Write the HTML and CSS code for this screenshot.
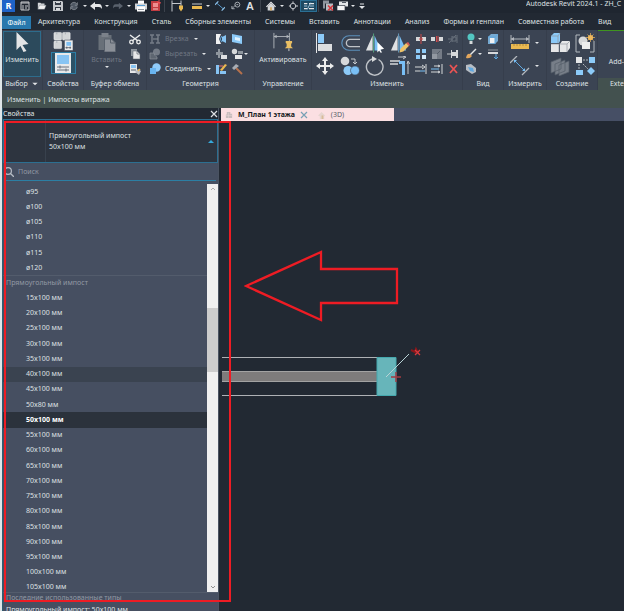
FILE: index.html
```html
<!DOCTYPE html>
<html lang="ru">
<head>
<meta charset="utf-8">
<title>Autodesk Revit 2024.1</title>
<link rel="stylesheet" href="styles.css">
</head>
<body>
<svg class="sprite" aria-hidden="true">
  <symbol id="i-caret" viewBox="0 0 6 4"><path d="M1 1h4L3 3z" fill="#e3e5e8"/></symbol>
  <symbol id="i-recent" viewBox="0 0 10 10"><path d="M1 1h8v8H1z" fill="none" stroke="#c6c8cb"/><path d="M1 2h8M3 4v5M5 5h3M5 7h2" stroke="#c6c8cb" fill="none"/></symbol>
  <symbol id="i-open" viewBox="0 0 12 10"><path d="M1 9V1h3l1 1h4v2" fill="#d6d8da"/><path d="M1 9l2-5h8L9 9z" fill="#f1f1f1" stroke="#59606b" stroke-width=".4"/></symbol>
  <symbol id="i-save" viewBox="0 0 10 10"><path d="M0 0h9l1 1v9H0z" fill="#c5c8cc"/><path d="M2 1h6v3H2zM2 6h6v3H2z" fill="#343b46"/><path d="M3 1h4v1H3zM3 7h4v2H3z" fill="#d7d9dc"/></symbol>
  <symbol id="i-sync" viewBox="0 0 12 10"><circle cx="6" cy="5" r="4" fill="#4f5864"/><path d="M2 4a4 4 0 0 1 7-2l1-1v3H7M10 6a4 4 0 0 1-7 2L2 9V6h3" fill="none" stroke="#8a9099"/></symbol>
  <symbol id="i-undo" viewBox="0 0 12 8"><path d="M0 4l5-4v2h4q3 0 3 5-1-2-3-2H5v3z" fill="#e6e7e8"/></symbol>
  <symbol id="i-redo" viewBox="0 0 12 8"><path d="M12 4L7 0v2H3Q0 2 0 7q1-2 3-2h4v3z" fill="#59616c"/></symbol>
  <symbol id="i-print" viewBox="0 0 12 11"><path d="M3 0h6v4H3z" fill="#fff"/><path d="M0 3h12v6H0z" fill="#d2d5d8"/><path d="M2 6h8v5H2z" fill="#fff"/><path d="M2 5h8" stroke="#5a9fd4"/><path d="M3 9h6" stroke="#8f969e"/></symbol>
  <symbol id="i-pdf" viewBox="0 0 12 12"><path d="M1 1h7l2 2v8H1z" fill="#c33c41"/><path d="M3 3h5v4H3z" fill="#ee8d8f"/><path d="M9 0v4M7 2l4 1" stroke="#f34f55"/><path d="M3 9h5" stroke="#f8c9c9"/></symbol>
  <symbol id="i-qdim" viewBox="0 0 12 11"><path d="M1 0v11M10 0v7M1 3h9" stroke="#c5c8cc" fill="none"/><path d="M8 5h4v3l-2 3-2-3z" fill="#eab951"/></symbol>
  <symbol id="i-qrule" viewBox="0 0 12 8"><path d="M1 2h10" stroke="#c5c8cc"/><path d="M1 4h10v3H1z" fill="#eab951"/></symbol>
  <symbol id="i-line" viewBox="0 0 12 11"><path d="M2 2l8 7" stroke="#5fa8e0"/><path d="M0 4l4-4M8 11l4-4" stroke="#8fc4ed" stroke-width="1.4"/></symbol>
  <symbol id="i-tag" viewBox="0 0 11 10"><path d="M1 8l4-4" stroke="#9da3aa"/><circle cx="7" cy="3.5" r="2.7" fill="none" stroke="#b3b8be"/><path d="M6 3.500h2M1 5v3h3" stroke="#b3b8be" fill="none"/></symbol>
  <symbol id="i-home" viewBox="0 0 12 11"><path d="M0 6l6-6 6 6-1 1-5-5-5 5z" fill="#e8e9ea"/><path d="M2 6l4-4 4 4v5H2z" fill="#d5d7d9"/><path d="M5 7h2v4H5z" fill="#d8a75a"/></symbol>
  <symbol id="i-section" viewBox="0 0 11 10"><circle cx="5.500" cy="5" r="3" fill="none" stroke="#c5c8cc"/><path d="M1 5h2M8 5h3M5.500 0v2M5.500 8v2" stroke="#e6e7e8"/></symbol>
  <symbol id="i-thin" viewBox="0 0 12 10"><path d="M0 2h4M6 2h6M0 8h4M6 8h6" stroke="#e6e7e8" stroke-width="1.500"/><path d="M0 5h4M7 5h5M4 9l4-8" stroke="#b9d9ee"/></symbol>
  <symbol id="i-closehid" viewBox="0 0 12 11"><path d="M1 0h6v3H3v5H1z" fill="#8e949c"/><path d="M4 3h7v7H4z" fill="#b9bdc2"/><path d="M6 5l5 5M11 5l-5 5" stroke="#d6393e" stroke-width="1.6"/></symbol>
  <symbol id="i-switch" viewBox="0 0 12 11"><path d="M2 1h9v5H2z" fill="#e3e5e7"/><path d="M0 5h8v5H0z" fill="#f5f5f5" stroke="#303843" stroke-width=".7"/><path d="M5 2h4" stroke="#505863"/></symbol>
  <symbol id="i-more" viewBox="0 0 6 7"><path d="M1 1h4" stroke="#e3e5e8"/><path d="M0 3h6L3 6z" fill="#e3e5e8"/></symbol>

  <symbol id="i-cursor" viewBox="0 0 13 20"><path d="M1 0l12 12-6 1 4 6-3 1-3-6-4 4z" fill="#e4e5e6"/></symbol>
  <symbol id="i-types" viewBox="0 0 21 20"><g fill="#d3d5d7" stroke="#fff" stroke-width=".5"><rect x="1" y="1" width="8" height="8" rx="1"/><rect x="10" y="1" width="8" height="8" rx="1"/><rect x="1" y="10" width="8" height="8" rx="1"/></g><path d="M4 1v2M13 1v2M4 10v2" stroke="#8f969e" stroke-width=".6"/><path d="M12 9h9v11h-9z" fill="#eceded" stroke="#3b4453" stroke-width=".6"/><path d="M14 11h5v4h-5z" fill="#7fc0f3"/><path d="M13 17h6M14.500 15.800v2.500M18 15.800v2.500" stroke="#3b4453" stroke-width=".7"/></symbol>
  <symbol id="i-props" viewBox="0 0 16 20"><path d="M0 0h16v20H0z" fill="#e8e9ea"/><path d="M2 2h12v9H2z" fill="#87c4f3"/><path d="M2 14h12M2 17h12M5 12.500v3M11 15.500v3" stroke="#69717d"/></symbol>
  <symbol id="i-paste" viewBox="0 0 19 20"><path d="M1 3h13v15H1z" fill="#697079"/><path d="M4 1h7v4H4z" fill="#7b818a"/><path d="M7 7h7l4 4v9H7z" fill="#8b9098" stroke="#59616c"/><path d="M13 7v4h5" fill="none" stroke="#59616c"/></symbol>
  <symbol id="i-cut" viewBox="0 0 12 12"><path d="M1 2l8 6M11 2L3 8" stroke="#eceded" stroke-width="1.500"/><circle cx="2.500" cy="9" r="1.800" fill="none" stroke="#eceded" stroke-width="1.300"/><circle cx="9.500" cy="9" r="1.800" fill="none" stroke="#eceded" stroke-width="1.300"/></symbol>
  <symbol id="i-copy" viewBox="0 0 12 12"><path d="M2 1h6v7H2z" fill="#8f969e"/><path d="M4 3h4l3 3v5H4z" fill="#e6e7e8" stroke="#59616c" stroke-width=".5"/><path d="M8 3v3h3" fill="none" stroke="#59616c" stroke-width=".7"/></symbol>
  <symbol id="i-match" viewBox="0 0 12 12"><path d="M1 1h7v9H1z" fill="#e6e7e8"/><path d="M2 2h5v3H2z" fill="#87c4f3"/><path d="M2 7h5" stroke="#59616c"/><path d="M6 9l3-3 3 2-2 4z" fill="#b9bdc2"/><path d="M9 8l2-2" stroke="#eab951" stroke-width="1.500"/></symbol>
  <symbol id="i-cope" viewBox="0 0 12 12"><path d="M1 2h4M1 10h4M3 2v8M7 2h4M7 10h4M9 2v8" stroke="#747b86" stroke-width="1.500"/><path d="M4 6h5" stroke="#8a9099"/></symbol>
  <symbol id="i-cutgeo" viewBox="0 0 12 12"><circle cx="7.500" cy="4" r="3.500" fill="#747b86"/><path d="M1 5h4q0 3 3 4v2H1z" fill="#5e6671" stroke="#8a9099" stroke-width=".7"/></symbol>
  <symbol id="i-join" viewBox="0 0 12 12"><circle cx="7.500" cy="4.500" r="4.200" fill="#8fcaf8"/><path d="M1 5h6v6H1z" fill="#69b4ef"/></symbol>
  <symbol id="i-wallin" viewBox="0 0 12 12"><path d="M1 1h5L4 6l2 5H1z" fill="#f0f1f2"/><path d="M11 2L7 4v4l4 2z" fill="#87c4f3"/><path d="M7 3L5 6l2 3" stroke="#5fa8e0" fill="none"/></symbol>
  <symbol id="i-face" viewBox="0 0 12 12"><path d="M1 1l10 2v8L1 9z" fill="#8ccaf8"/><path d="M4 4l5 1v3L4 7z" fill="#e0f2fe"/></symbol>
  <symbol id="i-beam" viewBox="0 0 12 12"><path d="M1 4h7v3H1zM3 1h2v9H3z" fill="#8f969e"/><path d="M6 7h6v4H6z" fill="#dfe1e3"/></symbol>
  <symbol id="i-shapes" viewBox="0 0 12 12"><circle cx="3.500" cy="3.500" r="2.700" fill="#d6d8da"/><path d="M7 3h5v3H7z" fill="#8f969e"/><path d="M4 7h7v4H4z" fill="#e6e7e8"/></symbol>
  <symbol id="i-paint" viewBox="0 0 12 12"><path d="M1 2h3v9H1zM5 8h6v3H5z" fill="#87c4f3"/><path d="M5 7l5-6 2 1-5 6z" fill="#eab951"/><path d="M4 3h4" stroke="#ec6f6f"/></symbol>
  <symbol id="i-hammer" viewBox="0 0 12 12"><path d="M5 5l6 6" stroke="#b5714c" stroke-width="2"/><path d="M1 5l4-4 3 2-5 4z" fill="#a7acb3"/></symbol>
  <symbol id="i-activate" viewBox="0 0 22 20"><path d="M1 0v17M18 0v9M1 4h17" stroke="#b3b8be" fill="none"/><path d="M1 4l3-2v4zM18 4l-3-2v4z" fill="#b3b8be"/><path d="M14 9h7v2l-1 1v3l2 2h-9l2-2v-3l-1-1z" fill="#e9bf63"/><path d="M17.500 17v3" stroke="#d6d8da"/></symbol>
  <symbol id="i-align" viewBox="0 0 20 20"><path d="M1.500 0v20" stroke="#e6e7e8"/><path d="M3 1h6v9H3z" fill="#8ccaf8"/><path d="M3 11h14v7H3z" fill="#dcdee0"/></symbol>
  <symbol id="i-offset" viewBox="0 0 22 20"><path d="M22 2H10a8 8 0 0 0 0 16h12" fill="none" stroke="#5b8fba" stroke-width="1.300"/><path d="M22 6H11a4 4 0 0 0 0 8h11" fill="none" stroke="#bfc3c8" stroke-width="1.500"/></symbol>
  <symbol id="i-mirrorpick" viewBox="0 0 21 20"><path d="M8 2v16H1z" fill="#e0e2e4"/><path d="M9 0v20" stroke="#59a77e"/><path d="M10 2v16h7z" fill="#79bff5"/><path d="M13 9l7 7-4 1 2 3h-2l-1-2-2 2z" fill="#fff"/></symbol>
  <symbol id="i-mirrordraw" viewBox="0 0 21 20"><path d="M8 2v16H1z" fill="#e0e2e4"/><path d="M9 0v20" stroke="#6c9fc2"/><path d="M10 2v16h7z" fill="#79bff5"/><path d="M11 16l6-6 3 3-6 6-4 1z" fill="#eec368"/><path d="M17 10l2-1 2 3-1 1z" fill="#e05a55"/></symbol>
  <symbol id="i-move" viewBox="0 0 18 18"><path d="M9 0l3 4h-2v4h4V6l4 3-4 3v-2h-4v4h2l-3 4-3-4h2v-4H4v2L0 9l4-3v2h4V4H6z" fill="#eceded"/></symbol>
  <symbol id="i-copytool" viewBox="0 0 20 20"><circle cx="5" cy="5" r="4.300" fill="#d6d8da"/><circle cx="8" cy="14.500" r="4.500" fill="#8ccaf8"/><circle cx="15" cy="14.500" r="4.500" fill="#79bff5" stroke="#3b4453" stroke-width=".6"/><path d="M11 3h4v4M13 6l2 2 2-2" fill="none" stroke="#c5c8cc"/></symbol>
  <symbol id="i-rotate" viewBox="0 0 20 20"><path d="M13.500 3.500a8.300 8.300 0 1 1-6-.6" fill="none" stroke="#bfc3c8" stroke-width="1.400"/><path d="M7 0l5 3-5 3z" fill="#d6d8da"/></symbol>
  <symbol id="i-trim" viewBox="0 0 20 20"><path d="M0 5h10M0 8h8" stroke="#d6d8da" stroke-width="1.500"/><path d="M9 6.500h4.500V19" fill="none" stroke="#79bff5" stroke-width="3"/><path d="M8 1h7M13 0l3 1-3 2M18 18V6M17 8l1-3 2 3" stroke="#c5c8cc" fill="none"/></symbol>
  <symbol id="i-split" viewBox="0 0 12 12"><path d="M1 4h4v4H1zM7 4h4v4H7z" fill="#d6d8da"/><path d="M6 1v10M4 6h4" stroke="#ce4b4b"/></symbol>
  <symbol id="i-splitgap" viewBox="0 0 12 12"><path d="M0 4h4v4H0zM8 4h4v4H8z" fill="#d6d8da"/><path d="M5.500 3v6M7 3v6" stroke="#ce4b4b"/></symbol>
  <symbol id="i-unpin" viewBox="0 0 12 12"><path d="M1 6h4M5 3v6M5 4h4v4H5M10 2v8M2 10l7-8" stroke="#69717d" fill="none"/></symbol>
  <symbol id="i-array" viewBox="0 0 12 12"><path d="M1 1h4v4H1zM7 1h4v4H7zM1 7h4v4H1z" fill="#8ccaf8"/><path d="M7 7h4v4H7z" fill="#d7ebfa"/></symbol>
  <symbol id="i-scale" viewBox="0 0 12 12"><path d="M1 1h10v10H1z" fill="#747b86"/><path d="M1 6h5v5H1z" fill="#9298a1"/><path d="M6 6l3-3" stroke="#555d68"/></symbol>
  <symbol id="i-pin" viewBox="0 0 12 12"><path d="M0 6h4" stroke="#c5c8cc"/><path d="M4 2h1v2h4V2h2v8H9V8H5v2H4z" fill="#d6d8da"/></symbol>
  <symbol id="i-extend" viewBox="0 0 12 12"><path d="M0 4h8M0 8h5M11 1v10" stroke="#d6d8da"/><path d="M5 8h5" stroke="#79bff5"/><path d="M7 2l3 2-3 2" stroke="#d6d8da" fill="none"/></symbol>
  <symbol id="i-extendm" viewBox="0 0 12 12"><path d="M0 9h8M3 3h5M11 1v10" stroke="#d6d8da"/><path d="M0 6h8" stroke="#79bff5"/><path d="M7 2l2 1-2 1M7 8l2 1-2 1" stroke="#d6d8da" fill="none"/></symbol>
  <symbol id="i-delete" viewBox="0 0 12 12"><path d="M3 2l7 8M10 2l-7 8" stroke="#ea5454" stroke-width="1.800"/></symbol>
  <symbol id="i-bulb" viewBox="0 0 12 12"><circle cx="6" cy="4" r="3.500" fill="#53c6c2"/><path d="M4.500 8h3v3h-3z" fill="#d6d8da"/></symbol>
  <symbol id="i-box" viewBox="0 0 12 12"><path d="M1 4l3-3h7v7l-3 3H1z" fill="#87c4f3" opacity=".8"/><path d="M3 5h5v5H3z" fill="#f0f1f2"/><path d="M1 4h7v7M8 4l3-3" stroke="#5fa8e0" fill="none"/></symbol>
  <symbol id="i-brush" viewBox="0 0 12 12"><path d="M5 7l6-6" stroke="#e6e7e8" stroke-width="1.500"/><path d="M1 10q1-5 4-4l2 2q-2 3-6 2z" fill="#e2a65c"/></symbol>
  <symbol id="i-lines" viewBox="0 0 12 12"><path d="M1 2h10" stroke="#8f969e"/><path d="M1 5h10" stroke="#d6d8da" stroke-width="2"/><path d="M9 6v5M7 9l2 2 2-2" stroke="#5fa8e0" fill="none"/></symbol>
  <symbol id="i-hide" viewBox="0 0 12 12"><path d="M1 2l5-1 5 4v4l-4 2-6-4z" fill="#b7bdc4"/><path d="M3 4l5 1 1 4-4-1z" fill="#5fa8e0"/></symbol>
  <symbol id="i-measure" viewBox="0 0 20 20"><path d="M1 2v8M19 2v8M1 6h18" stroke="#b3b8be"/><path d="M1 6l3-2v4zM19 6l-3-2v4z" fill="#b3b8be"/><path d="M1 11h18v5H1z" fill="#eab951"/><path d="M4 11v2M7 11v2M10 11v2M13 11v2M16 11v2" stroke="#8d6f32" stroke-width=".6"/></symbol>
  <symbol id="i-dim" viewBox="0 0 20 20"><path d="M4 4l11 11" stroke="#5fa8e0"/><path d="M0 7l7-7M12 19l7-7" stroke="#b3b8be" stroke-width="1.300"/><path d="M4 4h3L4 7zM15 15h-3l3-3z" fill="#79bff5"/></symbol>
  <symbol id="i-blocks" viewBox="0 0 20 20"><path d="M1 3l3-3h6v8l-1 2H1z" fill="#8ccaf8"/><path d="M1 11h8v8H1zM10 11l2-3h8v7l-3 4h-7z" fill="#e6e7e8"/><path d="M9 11v8M1 11h16v8M17 11l3-3M1 3h7v7M8 3l2-3" stroke="#8f969e" stroke-width=".7" fill="none"/></symbol>
  <symbol id="i-group" viewBox="0 0 20 20"><path d="M5 2H1v17h4M15 19h4V8" fill="none" stroke="#b3b8be"/><circle cx="8" cy="8" r="4.500" fill="#d6d8da"/><path d="M7 9h8v7H7z" fill="#eceded"/><circle cx="15.500" cy="4.500" r="2.600" fill="#edb85b"/><path d="M15.500 0v9M11 4.500h9M12.500 1.500l6 6M18.500 1.500l-6 6" stroke="#edb85b" stroke-width=".7"/></symbol>
  <symbol id="i-assembly" viewBox="0 0 20 20"><path d="M1 6l10-4v11L1 17zM5 8l10-4v11L5 19zM9 9l10-4v11L9 20z" fill="#777e88" stroke="#555d68" stroke-width=".7"/></symbol>
  <symbol id="i-parts" viewBox="0 0 20 20"><path d="M1 1h6v6H1z" fill="#e6e7e8"/><path d="M14 1h6v6h-6zM1 14h7v5H1zM16 11l4 4-4 4-4-4z" fill="#8ccaf8"/><path d="M8 4h5M4 8v5M8 8l5 5" stroke="#b3b8be" stroke-dasharray="2 1"/></symbol>
  <symbol id="i-search" viewBox="0 0 10 10"><circle cx="4" cy="4" r="3.400" fill="none" stroke="#b7bcc5" stroke-width="1.200"/><path d="M6.500 6.500L10 10" stroke="#b7bcc5" stroke-width="1.300"/></symbol>
  <symbol id="i-x" viewBox="0 0 8 8"><path d="M1 1l6 6M7 1L1 7" stroke="currentColor" stroke-width="1.200"/></symbol>
  <symbol id="i-plan" viewBox="0 0 9 9"><path d="M2 1h4v2h2v5H1V4h1z" fill="#c9bdbe"/><path d="M4 2v6M1 5h7" stroke="#e5d2d3" stroke-width=".7"/></symbol>
  <symbol id="i-view3d" viewBox="0 0 9 9"><path d="M0 5l4-4 4 4-1 1v3H2V6z" fill="#e6d5d0"/><path d="M4 5h2v4H4z" fill="#d9bb98"/></symbol>
</svg>

<div class="app">
  <header class="titlebar">
    <div class="qat">
      <button class="logo" aria-label="Revit">R</button>
      <button aria-label="Недавние"><svg class="s10"><use href="#i-recent"/></svg></button>
      <button aria-label="Открыть"><svg class="s10"><use href="#i-open"/></svg></button>
      <button aria-label="Сохранить"><svg class="s10"><use href="#i-save"/></svg></button>
      <button aria-label="Синхронизация"><svg class="s10"><use href="#i-sync"/></svg></button>
      <button aria-label="Меню синхронизации"><svg class="caret"><use href="#i-caret"/></svg></button>
      <button aria-label="Отменить"><svg class="s12"><use href="#i-undo"/></svg></button>
      <button aria-label="Список отмены"><svg class="caret"><use href="#i-caret"/></svg></button>
      <button aria-label="Повторить"><svg class="s10"><use href="#i-redo"/></svg></button>
      <button aria-label="Список повтора"><svg class="caret"><use href="#i-caret"/></svg></button>
      <button aria-label="Печать"><svg class="s12"><use href="#i-print"/></svg></button>
      <button aria-label="Экспорт PDF"><svg class="s12"><use href="#i-pdf"/></svg></button>
      <span class="sep"></span>
      <button aria-label="Активировать элементы управления"><svg class="s12"><use href="#i-qdim"/></svg></button>
      <button aria-label="Измерить"><svg class="s12"><use href="#i-qrule"/></svg></button>
      <button aria-label="Меню измерения"><svg class="caret"><use href="#i-caret"/></svg></button>
      <button aria-label="Размер"><svg class="s10"><use href="#i-line"/></svg></button>
      <button aria-label="Марка"><svg class="s10"><use href="#i-tag"/></svg></button>
      <button class="letter" aria-label="Текст">A</button>
      <span class="sep"></span>
      <button aria-label="3D вид"><svg class="s10"><use href="#i-home"/></svg></button>
      <button aria-label="Меню 3D вида"><svg class="caret"><use href="#i-caret"/></svg></button>
      <button aria-label="Разрез"><svg class="s10"><use href="#i-section"/></svg></button>
      <button class="on" aria-label="Тонкие линии"><svg class="s10"><use href="#i-thin"/></svg></button>
      <span class="sep"></span>
      <button aria-label="Закрыть неактивные"><svg class="s12"><use href="#i-closehid"/></svg></button>
      <button aria-label="Переключить окна"><svg class="s12"><use href="#i-switch"/></svg></button>
      <button aria-label="Меню окон"><svg class="caret"><use href="#i-caret"/></svg></button>
      <button aria-label="Настройка панели"><svg class="more"><use href="#i-more"/></svg></button>
    </div>
    <span class="title">Autodesk Revit 2024.1 - ZH_C</span>
  </header>

  <nav class="tabs">
    <a class="file" href="#">Файл</a><a href="#">Архитектура</a><a href="#">Конструкция</a><a href="#">Сталь</a><a href="#">Сборные элементы</a><a href="#">Системы</a><a href="#">Вставить</a><a href="#">Аннотации</a><a href="#">Анализ</a><a href="#">Формы и генплан</a><a href="#">Совместная работа</a><a href="#">Вид</a>
  </nav>

  <div class="ribbon">
    <section class="group g-select">
      <button class="big on"><svg class="cursor"><use href="#i-cursor"/></svg><span>Изменить</span></button>
      <h2>Выбор <svg class="caret wide"><use href="#i-caret"/></svg></h2>
    </section>
    <section class="group g-props">
      <div class="stack">
        <button aria-label="Свойства типа"><svg class="s20"><use href="#i-types"/></svg></button>
        <button class="on" aria-label="Палитра свойств"><svg class="s20"><use href="#i-props"/></svg></button>
      </div>
      <h2>Свойства</h2>
    </section>
    <section class="group g-clip">
      <div class="row">
        <button class="big off"><svg class="s20"><use href="#i-paste"/></svg><span>Вставить</span><svg class="caret"><use href="#i-caret"/></svg></button>
        <div class="small-grid one">
          <button aria-label="Вырезать в буфер"><svg class="s12"><use href="#i-cut"/></svg></button>
          <button aria-label="Копировать в буфер"><svg class="s12"><use href="#i-copy"/></svg></button>
          <button aria-label="Копирование свойств"><svg class="s12"><use href="#i-match"/></svg></button>
        </div>
      </div>
      <h2>Буфер обмена</h2>
    </section>
    <section class="group g-geom">
      <div class="row">
        <div class="small-grid text">
          <button class="off"><svg class="s12"><use href="#i-cope"/></svg>Врезка<svg class="caret"><use href="#i-caret"/></svg></button>
          <button class="off"><svg class="s12"><use href="#i-cutgeo"/></svg>Вырезать<svg class="caret"><use href="#i-caret"/></svg></button>
          <button><svg class="s12"><use href="#i-join"/></svg>Соединить<svg class="caret"><use href="#i-caret"/></svg></button>
        </div>
        <div class="small-grid two">
          <button aria-label="Примыкание"><svg class="s12"><use href="#i-wallin"/></svg></button>
          <button aria-label="Разделить грань"><svg class="s12"><use href="#i-face"/></svg></button>
          <button aria-label="Балки"><svg class="s12"><use href="#i-beam"/></svg></button>
          <button aria-label="Соединения"><svg class="s12"><use href="#i-shapes"/></svg><svg class="caret"><use href="#i-caret"/></svg></button>
          <button aria-label="Краска"><svg class="s12"><use href="#i-paint"/></svg></button>
          <button aria-label="Снос"><svg class="s12"><use href="#i-hammer"/></svg></button>
        </div>
      </div>
      <h2>Геометрия</h2>
    </section>
    <section class="group g-ctrl">
      <button class="big"><svg class="s20"><use href="#i-activate"/></svg><span>Активировать</span></button>
      <h2>Управление</h2>
    </section>
    <section class="group g-modify">
      <div class="row">
        <div class="mid-grid four">
          <button aria-label="Выровнять"><svg class="s20"><use href="#i-align"/></svg></button>
          <button aria-label="Сместить"><svg class="s20"><use href="#i-offset"/></svg></button>
          <button aria-label="Зеркало — выбрать ось"><svg class="s20"><use href="#i-mirrorpick"/></svg></button>
          <button aria-label="Зеркало — нарисовать ось"><svg class="s20"><use href="#i-mirrordraw"/></svg></button>
          <button aria-label="Переместить"><svg class="s18"><use href="#i-move"/></svg></button>
          <button aria-label="Копировать"><svg class="s20"><use href="#i-copytool"/></svg></button>
          <button aria-label="Повернуть"><svg class="s20"><use href="#i-rotate"/></svg></button>
          <button aria-label="Обрезать"><svg class="s20"><use href="#i-trim"/></svg></button>
        </div>
        <div class="small-grid three">
          <button aria-label="Разделить"><svg class="s12"><use href="#i-split"/></svg></button>
          <button aria-label="Разделить с зазором"><svg class="s12"><use href="#i-splitgap"/></svg></button>
          <button aria-label="Открепить"><svg class="s12"><use href="#i-unpin"/></svg></button>
          <button aria-label="Массив"><svg class="s12"><use href="#i-array"/></svg></button>
          <button aria-label="Масштаб"><svg class="s12"><use href="#i-scale"/></svg></button>
          <button aria-label="Прикрепить"><svg class="s12"><use href="#i-pin"/></svg></button>
          <button aria-label="Удлинить"><svg class="s12"><use href="#i-extend"/></svg></button>
          <button aria-label="Удлинить несколько"><svg class="s12"><use href="#i-extendm"/></svg></button>
          <button aria-label="Удалить"><svg class="s12"><use href="#i-delete"/></svg></button>
        </div>
      </div>
      <h2>Изменить</h2>
    </section>
    <section class="group g-view">
      <div class="small-grid two">
        <button aria-label="Скрыть на виде"><svg class="s12"><use href="#i-bulb"/></svg><svg class="caret"><use href="#i-caret"/></svg></button>
        <button aria-label="Рамка выбора"><svg class="s12"><use href="#i-box"/></svg></button>
        <button aria-label="Переопределить графику"><svg class="s12"><use href="#i-brush"/></svg><svg class="caret"><use href="#i-caret"/></svg></button>
        <button aria-label="Вес линий"><svg class="s12"><use href="#i-lines"/></svg></button>
        <button aria-label="Вытеснить"><svg class="s12"><use href="#i-hide"/></svg></button>
      </div>
      <h2>Вид</h2>
    </section>
    <section class="group g-measure">
      <div class="mid-grid">
        <button aria-label="Расстояние"><svg class="s20"><use href="#i-measure"/></svg><svg class="caret"><use href="#i-caret"/></svg></button>
        <button aria-label="Параллельный размер"><svg class="s20"><use href="#i-dim"/></svg><svg class="caret"><use href="#i-caret"/></svg></button>
      </div>
      <h2>Измерить</h2>
    </section>
    <section class="group g-create">
      <div class="mid-grid pair">
        <button aria-label="Создать части"><svg class="s20"><use href="#i-blocks"/></svg></button>
        <button aria-label="Создать группу"><svg class="s20"><use href="#i-group"/></svg></button>
        <button aria-label="Создать сборку"><svg class="s20"><use href="#i-assembly"/></svg></button>
        <button aria-label="Создать подобное"><svg class="s20"><use href="#i-parts"/></svg></button>
      </div>
      <h2>Создание</h2>
    </section>
    <section class="group g-ext">
      <button class="big"><span>Add-</span></button>
      <h2>Exte</h2>
    </section>
  </div>

  <div class="options">Изменить | Импосты витража</div>

  <div class="work">
    <aside class="palette">
      <div class="head"><span>Свойства</span><button aria-label="Закрыть палитру"><svg class="s8"><use href="#i-x"/></svg></button></div>
      <button class="type" aria-haspopup="listbox" aria-expanded="true">
        <span class="preview"></span>
        <span class="name">Прямоугольный импост<br>50x100 мм</span>
        <svg class="up" viewBox="0 0 6 4"><path d="M0 4l3-3 3 3z" fill="#36a9dc"/></svg>
      </button>
      <div class="search">
        <label for="q"><svg class="s10" aria-label="Поиск"><use href="#i-search"/></svg></label>
        <input id="q" type="text" placeholder="Поиск">
      </div>
      <div class="drop">
        <ul class="list" role="listbox" aria-label="Типоразмеры">
          <li role="option">ø95</li><li role="option">ø100</li><li role="option">ø105</li><li role="option">ø110</li><li role="option">ø115</li><li role="option">ø120</li>
          <li class="family" role="presentation">Прямоугольный импост</li>
          <li role="option">15x100 мм</li><li role="option">20x100 мм</li><li role="option">25x100 мм</li><li role="option">30x100 мм</li><li role="option">35x100 мм</li><li class="hover" role="option">40x100 мм</li><li role="option">45x100 мм</li><li role="option">50x80 мм</li><li class="current" role="option" aria-selected="true">50x100 мм</li><li role="option">55x100 мм</li><li role="option">60x100 мм</li><li role="option">65x100 мм</li><li role="option">70x100 мм</li><li role="option">75x100 мм</li><li role="option">80x100 мм</li><li role="option">85x100 мм</li><li role="option">90x100 мм</li><li role="option">95x100 мм</li><li role="option">100x100 мм</li><li role="option">105x100 мм</li>
        </ul>
        <div class="scroll">
          <svg viewBox="0 0 6 4"><path d="M1 3l2-2 2 2" fill="none" stroke="#9a9a9a" stroke-width=".8"/></svg>
          <span class="before"></span><span class="thumb"></span><span class="after"></span>
          <svg viewBox="0 0 6 4"><path d="M1 1l2 2 2-2" fill="none" stroke="#777" stroke-width=".8"/></svg>
        </div>
      </div>
      <div class="recent">Последние использованные типы</div>
      <div class="last">Прямоугольный импост: 50x100 мм</div>
    </aside>

    <main class="views">
      <div class="viewtabs">
        <div class="opened">
          <a class="active" href="#"><svg class="s8"><use href="#i-plan"/></svg>М_План 1 этажа</a>
          <button aria-label="Закрыть вид"><svg class="s8"><use href="#i-x"/></svg></button>
          <a href="#"><svg class="s8"><use href="#i-view3d"/></svg>(3D)</a>
        </div>
      </div>
      <svg class="drawing" width="403" height="490" viewBox="221 121 403 490" role="img" aria-label="Импост на плане">
        <path d="M222 357.500h155M222 395.500h155" stroke="#aeb1b5"/>
        <path d="M222 371h155v11H222z" fill="#7e7c7c"/>
        <path d="M222 371.500h155M222 381.500h155" stroke="#a3a3a3"/>
        <path d="M377 357.500h19v38h-19z" fill="#67b5ba" stroke="#45a8ae"/>
        <path d="M386 377l23-23" stroke="#b9d3d6"/>
        <path d="M391 377h10M396 372v10" stroke="#a23b42" stroke-width="1.500"/>
        <path d="M411 350l4 2 1-3 2 4" stroke="#8b171b" stroke-width="2" fill="none"/>
        <path d="M415 350l5 5M420 350l-5 5" stroke="#d7383c" stroke-width="1.300"/>
      </svg>
    </main>
  </div>
  <div class="frame"></div>
  <svg class="arrow" viewBox="0 0 156 72"><path d="M2 36L77 2v17h76v34H77v17z" fill="none" stroke="#ee1c24" stroke-width="2.300"/></svg>
</div>
</body>
</html>
```
FILE: styles.css
```css
* { box-sizing: border-box; }
body {
  margin: 0;
  background: #dfe5e8;
  color: #dfe1e4;
  font: 7px/10px "Noto Sans", "Open Sans", sans-serif;
}
button {
  display: flex;
  align-items: center;
  justify-content: center;
  padding: 0;
  border: 0;
  background: none;
  color: inherit;
  font: inherit;
}
a { color: inherit; text-decoration: none; }
svg { display: block; flex: none; }
.sprite { position: absolute; width: 0; height: 0; }
.s8 { width: 8px; height: 8px; }
.s10 { width: 10px; height: 10px; }
.s12 { width: 12px; height: 12px; }
.s18 { width: 18px; height: 18px; }
.s20 { width: 20px; height: 20px; }
.caret { width: 6px; height: 4px; }
.caret.wide { width: 8px; height: 6px; }
.more { width: 6px; height: 7px; }
.cursor { width: 14px; height: 20px; }

.app {
  position: relative;
  display: flex;
  flex-direction: column;
  height: 100vh;
  margin-left: 2px;
  overflow: hidden;
  background: #222933;
}

.titlebar {
  display: flex;
  justify-content: space-between;
  height: 13px;
  flex: none;
  background: #1f2630;
}
.qat {
  display: grid;
  grid-template-columns: 14px 17px 17px 16px 15px 7px 16px 6px 16px 6px 17px 14px 2px 23px 17px 6px 18px 13px 16px 4px 17px 6px 15px 17px 3px 15px 15px 6px 12px;
  height: 11px;
}
.qat .sep { width: 1px; background: #3b424c; justify-self: center; }
.logo { background: #1f63c8; color: #fff; font-weight: 700; font-size: 9px; margin-right: 1px; }
.letter { font-size: 11px; font-weight: 600; }
.qat .on { background: #1d4a63; border: 1px solid #2b6f94; }
.title { width: 98px; white-space: nowrap; overflow: hidden; line-height: 8px; }

.tabs {
  display: flex;
  gap: 14px;
  height: 16px;
  margin-top: 1px;
  flex: none;
  line-height: 16px;
  white-space: nowrap;
}
.tabs .file {
  width: 29px;
  margin-right: -7px;
  height: 13px;
  margin-top: 2px;
  line-height: 13px;
  text-align: center;
  background: #2878ad;
  color: #fff;
}

.ribbon { display: flex; height: 60px; flex: none; background: #3b4453; }
.group {
  display: flex;
  flex-direction: column;
  justify-content: space-between;
  flex: none;
  padding-top: 1px;
  border-right: 1px solid #363e4c;
}
.group h2 {
  display: flex;
  align-items: center;
  justify-content: center;
  gap: 3px;
  height: 12px;
  margin: 0;
  font: inherit;
  white-space: nowrap;
}
.g-select { width: 41px; }
.g-props { width: 41px; }
.g-clip { width: 63px; }
.g-geom { width: 108px; }
.g-ctrl { width: 57px; }
.g-modify { width: 151px; }
.g-view { width: 41px; }
.g-measure { width: 43px; }
.g-create { width: 51px; }
.g-ext { flex: 1; border: 0; border-top: 1px solid #3f9420; padding: 0; }
.g-ext h2 { background: #43514f; justify-content: flex-end; }
.g-ext .big { padding-top: 23px; align-items: flex-end; }
.row { display: flex; }
.big { flex-direction: column; justify-content: flex-start; height: 46px; padding-top: 1px; white-space: nowrap; }
.big span { margin-top: 3px; }
.g-select .big { margin: 0 1px; }
.big.on { background: #2c4a5c; border: 1px solid #2d6c8c; padding-top: 0; }
.off { color: #707783; }
.stack { display: flex; flex-direction: column; align-items: center; gap: 1px; }
.stack .on { width: 25px; height: 22px; background: #2c5267; border: 1px solid #2d7ea5; }
.g-clip .big { width: 45px; }
.small-grid { display: grid; grid-auto-rows: 15px; }
.small-grid button { justify-content: flex-start; }
.small-grid.text { width: 68px; padding-left: 2px; }
.small-grid.text button { gap: 4px; }
.small-grid.two { grid-template-columns: 16px 20px; }
.g-view .small-grid.two { grid-template-columns: 22px 14px; padding-left: 2px; }
.small-grid.three { grid-template-columns: repeat(3, 16px); padding-left: 3px; }
.mid-grid { display: grid; grid-auto-rows: 23px; padding-left: 6px; }
.mid-grid.four { grid-template-columns: repeat(4, 25px); padding-left: 0; }
.mid-grid.pair { grid-template-columns: repeat(2, 25px); padding-left: 0; }
.g-measure .mid-grid button { justify-content: flex-start; gap: 4px; }

.options {
  height: 18px;
  flex: none;
  padding-left: 5px;
  line-height: 19px;
  background: #43514f;
}

.work { display: flex; flex: 1; min-height: 0; }
.palette {
  display: flex;
  flex-direction: column;
  width: 217px;
  flex: none;
  border-left: 1px solid #2c6073;
  border-right: 1px solid #4a5361;
  background: #464f61;
}
.head {
  display: flex;
  justify-content: space-between;
  align-items: center;
  height: 11px;
  flex: none;
  background: #222933;
}
.type {
  height: 44px;
  flex: none;
  justify-content: flex-start;
  border: 1px solid #2c6f91;
  background: #2d343f;
  text-align: left;
}
.preview { width: 42px; height: 42px; border-right: 1px solid #38414d; }
.name { flex: 1; padding-left: 3px; line-height: 11px; }
.up { width: 6px; height: 4px; margin-right: 3px; }
.search {
  display: flex;
  align-items: center;
  height: 18px;
  flex: none;
  margin: 0 2px 3px 1px;
  border-bottom: 1px solid #2c7fa4;
}
.search input {
  flex: 1;
  min-width: 0;
  padding: 0 4px;
  border: 0;
  outline: 0;
  background: none;
  color: inherit;
  font: inherit;
}
.search input::placeholder { color: #9097a3; opacity: 1; }
.drop { display: flex; flex: 1; min-height: 0; overflow: hidden; }
.list {
  display: flex;
  flex-direction: column;
  flex: 1;
  margin: 0 0 -3px;
  padding: 0;
  list-style: none;
}
.list li { display: flex; align-items: center; flex: 1; min-height: 0; padding-left: 23px; }
.list .family {
  flex: 0 0 15px;
  padding-left: 3px;
  border-top: 1px solid #535c6c;
  color: #9299a4;
}
.list .hover { background: #3a4350; }
.list .current { background: #2b323c; color: #fff; font-weight: 700; }
.scroll {
  display: flex;
  flex-direction: column;
  align-items: center;
  width: 11px;
  background: #f0f0f0;
}
.scroll svg { width: 6px; height: 4px; margin: 3px 0; }
.before { flex: 114; }
.thumb { flex: 64; width: 11px; background: #cdcdcd; }
.after { flex: 211; }
.recent {
  height: 9px;
  flex: none;
  padding-left: 3px;
  overflow: hidden;
  border-top: 1px solid #535c6c;
  line-height: 10px;
  color: #9299a4;
}
.last { height: 10px; flex: none; padding: 4px 0 0 3px; white-space: nowrap; }

.views { display: flex; flex-direction: column; flex: 1; min-width: 0; padding-left: 2px; }
.viewtabs { height: 13px; flex: none; background: #464f65; color: #59616c; }
.opened {
  display: flex;
  align-items: center;
  width: 173px;
  height: 13px;
  padding-left: 4px;
  background: #fbdfe2;
}
.opened a { display: flex; align-items: center; gap: 5px; white-space: nowrap; }
.opened .active { color: #15181c; font-weight: 700; }
.opened button { margin: 0 10px 0 5px; color: #78a0b5; }

.frame {
  position: absolute;
  left: 2px;
  top: 121px;
  width: 227px;
  height: 481px;
  border: 2px solid #ee1c24;
}
.arrow { position: absolute; left: 242px; top: 250px; width: 156px; height: 72px; }
```
